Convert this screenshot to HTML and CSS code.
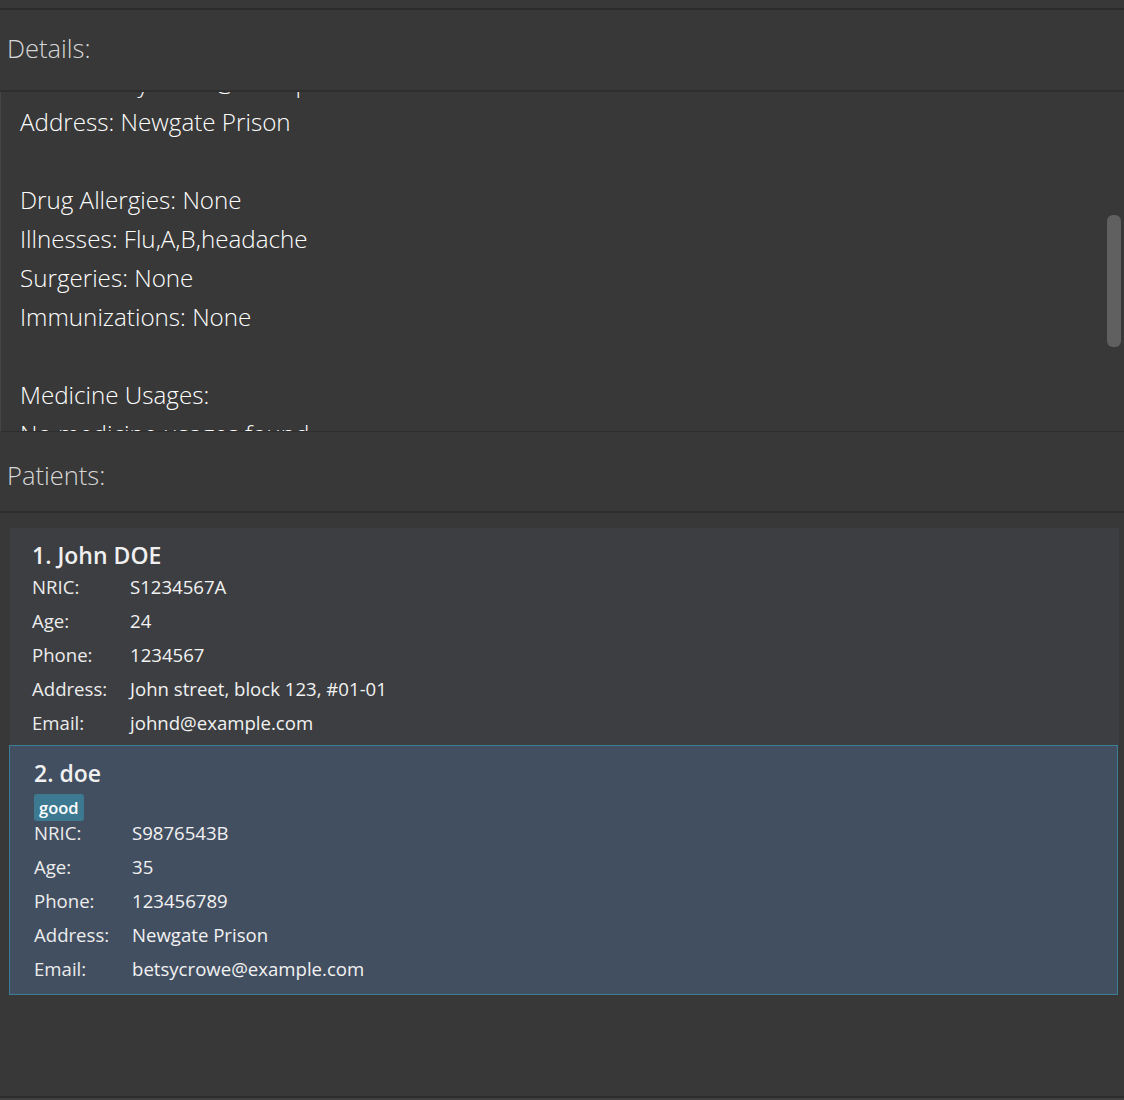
FILE: index.html
```html
<!DOCTYPE html>
<html lang="en">
<head>
<meta charset="utf-8">
<title>Patients</title>
<link rel="stylesheet" href="styles.css">
</head>
<body>
<div class="app">
  <div class="topbar"></div>
  <div class="panel-header details-header">Details:</div>
  <div class="details">
    <div class="details-text">
      <div class="line">Email: betsycrowe@example.com</div>
      <div class="line">Address: Newgate Prison</div>
      <div class="line blank"></div>
      <div class="line">Drug Allergies: None</div>
      <div class="line">Illnesses: Flu,A,B,headache</div>
      <div class="line">Surgeries: None</div>
      <div class="line">Immunizations: None</div>
      <div class="line blank"></div>
      <div class="line">Medicine Usages:</div>
      <div class="line">No medicine usages found</div>
    </div>
    <div class="scroll-thumb"></div>
  </div>
  <div class="panel-header patients-header">Patients:</div>
  <div class="list">
    <div class="card">
      <div class="card-title">1. John DOE</div>
      <div class="fields">
        <div class="row"><span class="label">NRIC:</span><span class="value">S1234567A</span></div>
        <div class="row"><span class="label">Age:</span><span class="value">24</span></div>
        <div class="row"><span class="label">Phone:</span><span class="value">1234567</span></div>
        <div class="row"><span class="label">Address:</span><span class="value">John street, block 123, #01-01</span></div>
        <div class="row"><span class="label">Email:</span><span class="value">johnd@example.com</span></div>
      </div>
    </div>
    <div class="card selected">
      <div class="card-title">2. doe</div>
      <div class="tags"><span class="tag">good</span></div>
      <div class="fields">
        <div class="row"><span class="label">NRIC:</span><span class="value">S9876543B</span></div>
        <div class="row"><span class="label">Age:</span><span class="value">35</span></div>
        <div class="row"><span class="label">Phone:</span><span class="value">123456789</span></div>
        <div class="row"><span class="label">Address:</span><span class="value">Newgate Prison</span></div>
        <div class="row"><span class="label">Email:</span><span class="value">betsycrowe@example.com</span></div>
      </div>
    </div>
  </div>
  <div class="bottombar"></div>
</div>
</body>
</html>
```
FILE: styles.css
```css
html, body {
  margin: 0;
  padding: 0;
  background: #383838;
}
.app {
  width: 1124px;
  height: 1100px;
  display: flex;
  flex-direction: column;
  background: #383838;
  font-family: "Open Sans", "Noto Sans", sans-serif;
  overflow: hidden;
}
.topbar {
  height: 8px;
  border-bottom: 2px solid #2c2c2c;
  flex: none;
}
.panel-header {
  flex: none;
  box-sizing: border-box;
  padding-left: 7px;
  display: flex;
  align-items: center;
  font-size: 25.5px;
  font-weight: 300;
  color: #d6d6d6;
  border-bottom: 2px solid #2e2e2e;
  white-space: nowrap;
}
.details-header {
  height: 82px;
  padding-bottom: 5px;
}
.patients-header {
  height: 81px;
  padding-top: 7px;
}
.details {
  flex: none;
  position: relative;
  height: 340px;
  overflow: hidden;
  border-left: 1px solid #454545;
  border-bottom: 1px solid #2e2e2e;
  box-sizing: border-box;
}
.details-text {
  margin-top: -29px;
  padding-left: 19px;
  font-size: 24.2px;
  font-weight: 300;
  color: #ffffff;
}
.line {
  height: 39px;
  line-height: 39px;
  white-space: nowrap;
}
.scroll-thumb {
  position: absolute;
  right: 3px;
  top: 123px;
  width: 14px;
  height: 132px;
  border-radius: 6px;
  background: #606060;
}
.list {
  flex: 1;
  padding: 15px 5px 0 10px;
  display: flex;
  flex-direction: column;
}
.card {
  background: #3c3e41;
  padding: 12px 22px 10px;
  color: #ececec;
}
.card-title {
  font-size: 23px;
  font-weight: 600;
  line-height: 30px;
  color: #f0f0f0;
  white-space: nowrap;
}
.fields {
  margin-top: 5px;
  display: flex;
  flex-direction: column;
  gap: 10px;
}
.row {
  display: flex;
  line-height: 24px;
  font-size: 18.6px;
  white-space: nowrap;
}
.label {
  width: 98px;
  flex: none;
}
.value {
  color: #f2f2f2;
}
.card.selected {
  background: #424f61;
  border: 1px solid #3a7d95;
  margin-left: -1px;
  margin-right: 1px;
  padding: 12px 24px 13px;
}
.card.selected .fields {
  margin-top: 0;
}
.tags {
  margin-top: 6px;
  display: flex;
  height: 27px;
}
.tag {
  background: #3d7a91;
  color: #ffffff;
  font-size: 16.5px;
  font-weight: 600;
  padding: 0 5px;
  border-radius: 3px;
  line-height: 27px;
}
.bottombar {
  flex: none;
  height: 2px;
  border-top: 2px solid #2c2c2c;
  background: #404040;
}
```
